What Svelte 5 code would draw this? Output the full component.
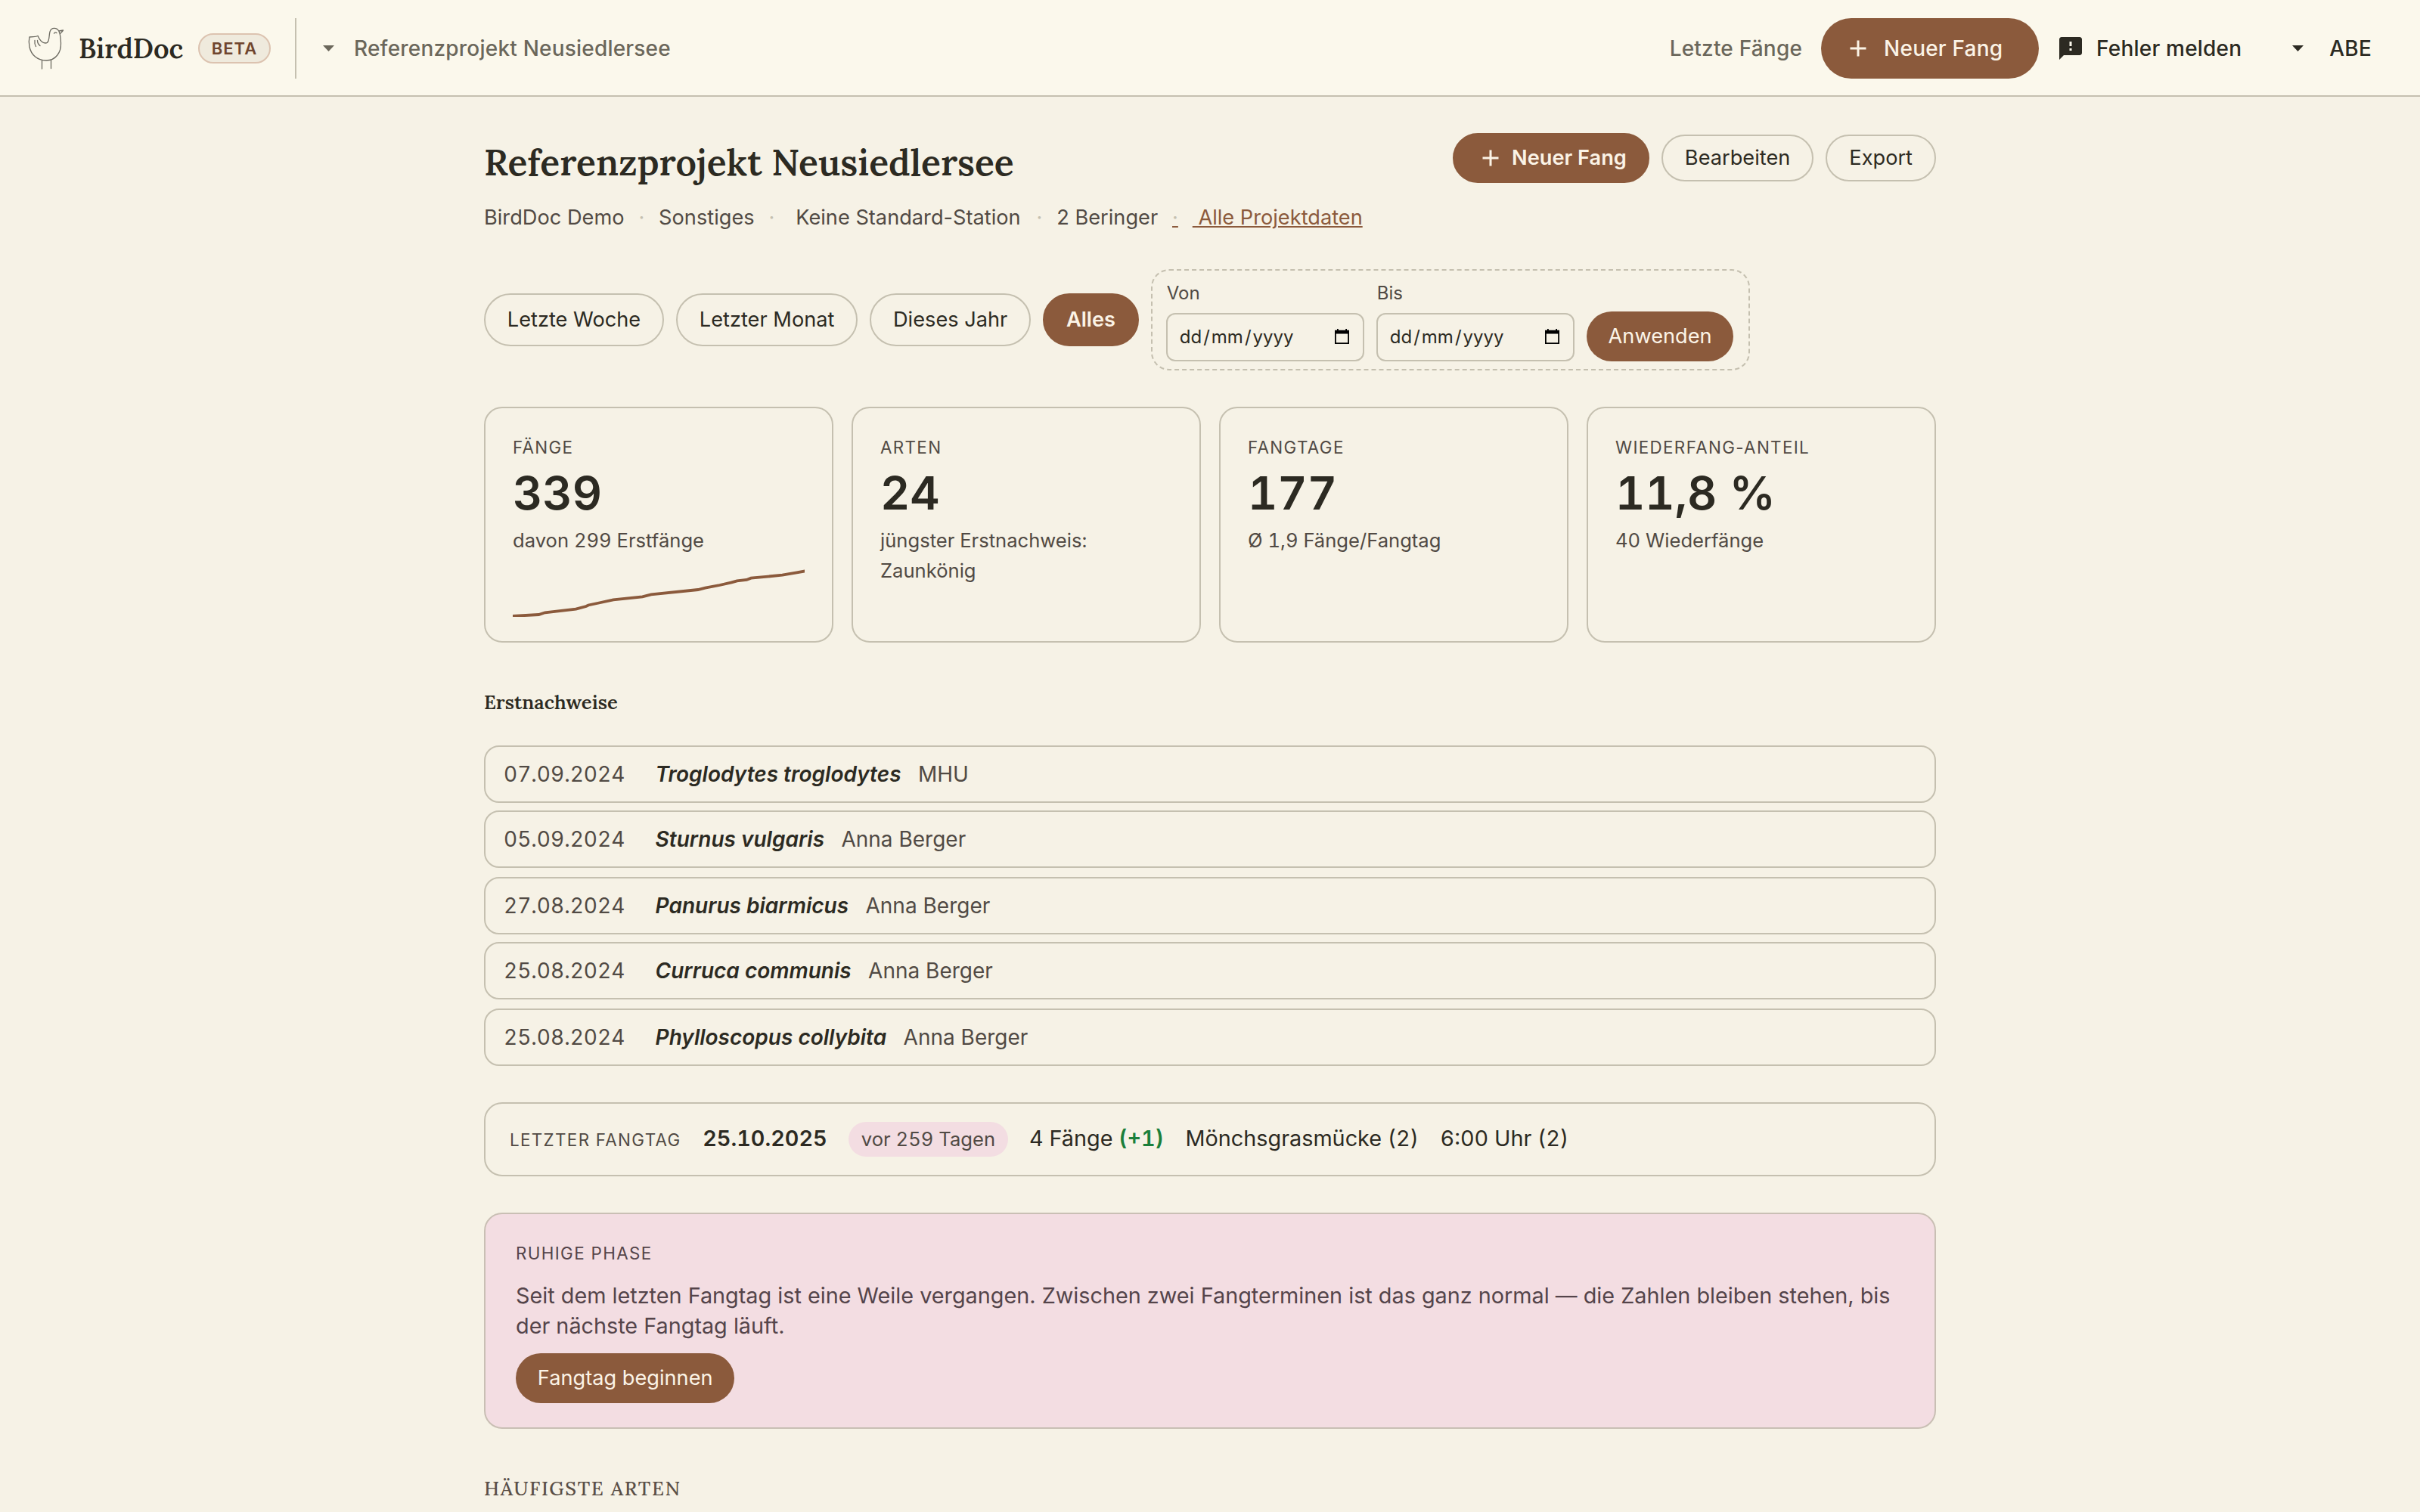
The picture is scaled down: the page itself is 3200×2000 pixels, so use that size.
<script>
  const filters = ['Letzte Woche', 'Letzter Monat', 'Dieses Jahr', 'Alles'];
  const firsts = [
    ['07.09.2024', 'Troglodytes troglodytes', 'MHU'],
    ['05.09.2024', 'Sturnus vulgaris', 'Anna Berger'],
    ['27.08.2024', 'Panurus biarmicus', 'Anna Berger'],
    ['25.08.2024', 'Curruca communis', 'Anna Berger'],
    ['25.08.2024', 'Phylloscopus collybita', 'Anna Berger']
  ];
  const stats = [
    { label: 'Fänge', value: '339', sub: 'davon 299 Erstfänge', spark: true },
    { label: 'Arten', value: '24', sub: 'jüngster Erstnachweis: Zaunkönig' },
    { label: 'Fangtage', value: '177', sub: 'Ø 1,9 Fänge/Fangtag' },
    { label: 'Wiederfang-Anteil', value: '11,8 %', sub: '40 Wiederfänge' }
  ];
</script>

{#snippet plus()}
  <svg width="36" height="36" viewBox="0 0 24 24"><path d="M19 13h-6v6h-2v-6H5v-2h6V5h2v6h6z" fill="currentColor" /></svg>
{/snippet}

{#snippet caret()}
  <svg width="15" height="8" viewBox="0 0 15 8"><path d="M0 0h15L7.500 8z" fill="currentColor" /></svg>
{/snippet}

<div class="page">
  <header>
    <svg class="bird" width="52" height="60" viewBox="14 14 52 60">
      <path d="M30 27.500C27.500 29.300 23 28 19 29C18 33 18 37 19 42C21 52 29 60 41 60C54 60 61 49 60.500 37C60.300 29 59.500 25 58 21.500C55 16 48 16 46 22C44.500 27 46 37 40 37C35 37 32 32 30 27.500M26 33.500C25.500 37 26 39 27.500 41.500M29.500 33.500C29.500 36 30.500 38.500 33 40.500M51.500 24.200C52.500 22.500 54 22.500 55 23.600M58 21L63.500 20C62 22 60.500 23.500 59.300 25M35.500 59.500V71M47.500 59V70.500" />
    </svg>
    <span class="brand">BirdDoc</span>
    <span class="beta">BETA</span>
    <span class="divider"></span>
    <div class="project">{@render caret()}<span>Referenzprojekt Neusiedlersee</span></div>
    <nav>
      <span class="muted">Letzte Fänge</span>
      <button class="nav-cta">{@render plus()}<span>Neuer Fang</span></button>
      <span class="report">
        <svg width="36" height="36" viewBox="0 0 24 24"><path d="M20 2H4c-1.100 0-1.990.9-1.990 2L2 22l4-4h14c1.100 0 2-.9 2-2V4c0-1.100-.9-2-2-2zm-7 12h-2v-2h2v2zm0-4h-2V6h2v4z" fill="currentColor" /></svg>
        <span>Fehler melden</span>
      </span>
      <span class="user">{@render caret()}<span>ABE</span></span>
    </nav>
  </header>

  <main>
    <div class="head">
      <h1>Referenzprojekt Neusiedlersee</h1>
      <div class="actions">
        <button class="btn primary">{@render plus()}<span>Neuer Fang</span></button>
        <button class="btn">Bearbeiten</button>
        <button class="btn">Export</button>
      </div>
    </div>
    <div class="meta">
      <span>BirdDoc Demo</span><i>·</i><span>Sonstiges</span><i>·</i><span class="station">Keine Standard-Station</span><i>·</i><span>2 Beringer</span><a href="#daten"><i>·</i><span>&nbsp;Alle Projektdaten</span></a>
    </div>

    <div class="filters">
      {#each filters as f}
        <button class="pill" class:active={f === 'Alles'}>{f}</button>
      {/each}
      <div class="range">
        {#each ['Von', 'Bis'] as l}
          <div class="field">
            <span class="flabel">{l}</span>
            <div class="date">
              <span>dd<s>/</s>mm<s>/</s>yyyy</span>
              <svg width="19" height="20" viewBox="0 0 19 20"><path d="M3 0h1.800v1.700h9.400V0H16v1.700h3V20H0V1.700h3zM1.800 6.600v11.600h15.400V6.600z" fill-rule="evenodd" /></svg>
            </div>
          </div>
        {/each}
        <button class="apply">Anwenden</button>
      </div>
    </div>

    <section class="stats">
      {#each stats as s}
        <article>
          <div class="label">{s.label}</div>
          <div class="value">{s.value}</div>
          <div class="sub">{s.sub}</div>
          {#if s.spark}
            <svg class="spark" width="386" height="64" viewBox="0 0 386 64"><path d="M0 63L34.400 61L42.700 58.300L83.500 53.700L97 50L100 48.500L114 45.500L133 41.300L171.500 37.300L183 34.300L245 28L254.500 25.700L273.600 22L289.500 18.300L296.500 16.300L309.300 15L315 12.700L356.500 8.700L375.600 5.300L387 3.300" /></svg>
          {/if}
        </article>
      {/each}
    </section>

    <h2>Erstnachweise</h2>
    <ul>
      {#each firsts as [d, n, who]}
        <li><span class="d">{d}</span><em>{n}</em><span class="who">{who}</span></li>
      {/each}
    </ul>

    <section class="last">
      <span class="label">Letzter Fangtag</span>
      <b>25.10.2025</b>
      <span class="chip">vor 259 Tagen</span>
      <span>4 Fänge <strong>(+1)</strong></span>
      <span>Mönchsgrasmücke (2)</span>
      <span>6:00 Uhr (2)</span>
    </section>

    <section class="quiet">
      <div class="label">Ruhige Phase</div>
      <p>Seit dem letzten Fangtag ist eine Weile vergangen. Zwischen zwei Fangterminen ist das ganz normal — die Zahlen bleiben stehen, bis der nächste Fangtag läuft.</p>
      <button class="apply">Fangtag beginnen</button>
    </section>

    <h3>Häufigste Arten</h3>
  </main>
</div>

<style>
  :global(body) { background: #f6f2e6; }
  .page { width: 3200px; height: 2000px; overflow: hidden; background: #f6f2e6; color: #2c2a22; font: 27.2px/40px Inter, sans-serif; }
  .page * { box-sizing: border-box; }
  button { font: inherit; letter-spacing: inherit; color: inherit; margin: 0; border: 0; background: none; white-space: nowrap; }
  svg { flex: none; display: block; }

  header { height: 128px; border-bottom: 2px solid #c5c0b0; background: #fbf8ec; display: flex; align-items: center; padding: 2px 64px 0 34px; font-size: 28px; font-weight: 500; letter-spacing: 0.2px; }
  .bird path { fill: none; stroke: #6c6a61; stroke-width: 1.300; stroke-linecap: round; stroke-linejoin: round; }
  .brand, h1, h2, h3 { font-family: Lora, 'Liberation Serif', serif; font-weight: 600; }
  .brand { font-size: 36px; margin-left: 18px; width: 138px; white-space: nowrap; letter-spacing: 0; }
  .beta { margin-left: 20px; width: 96px; height: 40px; border: 2px solid #dcc3b0; border-radius: 20px; background: #efeadd; color: #6f452e; font-size: 22px; line-height: 36px; font-weight: 600; letter-spacing: 1px; text-align: center; }
  .divider { width: 2px; height: 80px; background: #c5c0b0; margin-left: 32px; }
  .project { display: flex; align-items: center; gap: 26px; margin-left: 35px; color: #6b675b; }
  nav { margin-left: auto; display: flex; align-items: center; }
  .muted { color: #6b675b; }
  .nav-cta { margin: 0 24px 0 25px; width: 288px; height: 80px; border-radius: 40px; background: #8b5a3c; color: #fbf3e6; display: flex; align-items: center; gap: 16px; padding: 0 31px; }
  .report { display: flex; align-items: center; gap: 16px; }
  .user { display: flex; align-items: center; gap: 34px; margin-left: 67px; }

  main { width: 1920px; margin: 0 auto; padding-top: 48px; }
  .head { display: flex; justify-content: space-between; height: 80px; }
  h1 { margin: 0; font-size: 48px; line-height: 78px; }
  .actions { display: flex; align-items: center; gap: 16px; height: 66px; }
  .btn { height: 62px; border: 2px solid #c5c0b0; border-radius: 33px; padding: 0 29px; }
  .btn.primary { height: 66px; background: #8b5a3c; border-color: #8b5a3c; color: #fbf3e6; font-weight: 600; display: flex; align-items: center; gap: 10px; padding: 0 28px 0 30px; }
  .meta { display: flex; margin-top: 12px; color: #514a44; height: 40px; }
  .meta i { font-style: normal; color: #c5c0b0; width: 8px; margin: 0 18.8px; text-align: center; }
  .meta a { color: #8b5a3c; text-decoration: underline; display: flex; }
  .station { margin: 0 2px 0 9px; }

  .filters { display: flex; align-items: center; gap: 16px; margin-top: 48px; }
  .pill { height: 70px; border: 2px solid #c5c0b0; border-radius: 35px; padding: 0 28.8px; }
  .pill.active { background: #8b5a3c; border-color: #8b5a3c; color: #fbf3e6; font-weight: 600; }
  .range { height: 134px; border: 2px dashed #c5c0b0; border-radius: 24px; padding: 0 20px 10px 18px; display: flex; align-items: flex-end; gap: 16px; }
  .flabel { display: block; font-size: 24px; line-height: 32px; margin-bottom: 10px; padding-left: 1px; color: #514a44; }
  .date { width: 262px; height: 64px; border: 2px solid #c5c0b0; border-radius: 12px; padding: 0 18px 0 16px; display: flex; align-items: center; justify-content: space-between; font-size: 24px; }
  .date s { text-decoration: none; padding: 0 2px; }
  .date svg { margin-bottom: 2px; }
  .apply { height: 66px; border-radius: 33px; background: #8b5a3c; color: #fbf3e6; padding: 0 28.8px; }

  .stats { display: grid; grid-template-columns: repeat(4, 1fr); gap: 24px; margin-top: 48px; }
  article { height: 312px; border: 2px solid #c5c0b0; border-radius: 24px; padding: 32px 36px; }
  .label { font-size: 22.4px; line-height: 40px; letter-spacing: 0.06em; text-transform: uppercase; color: #514a44; }
  .value { margin-top: 4px; font-size: 60.8px; line-height: 72px; font-weight: 600; font-variant-numeric: tabular-nums; }
  .sub { margin-top: 7px; font-size: 25.6px; line-height: 40px; color: #514a44; font-variant-numeric: tabular-nums; }
  .spark { margin-top: 17px; }
  .spark path { fill: none; stroke: #8b5a3c; stroke-width: 3.800; }

  h2 { margin: 55px 0 33px; font-size: 25.6px; line-height: 48px; }
  ul { list-style: none; margin: 0; padding: 0; font-size: 28px; }
  li { height: 76px; border: 2px solid #c5c0b0; border-radius: 20px; padding: 0 24px; display: flex; align-items: center; margin-bottom: 12px; }
  li:nth-child(odd) { margin-bottom: 10px; }
  .d { width: 200.6px; font-variant-numeric: tabular-nums; color: #514a44; }
  em { font-weight: 600; margin-right: 22.4px; }
  .who { color: #514a44; }

  .last { margin-top: 48px; height: 98px; border: 2px solid #c5c0b0; border-radius: 24px; padding: 24px 32px 0; display: flex; align-items: baseline; gap: 28.6px; font-size: 28.8px; font-variant-numeric: tabular-nums; }
  .last b { font-weight: 600; }
  strong { color: #1b7f3b; font-weight: 600; }
  .chip { height: 46px; line-height: 46px; border-radius: 23px; background: #f3dde2; padding: 0 16.5px; font-size: 25.6px; color: #514a44; }

  .quiet { margin-top: 48px; height: 286px; border: 2px solid #c9bfb4; border-radius: 24px; background: #f3dde2; padding: 32px 40px; color: #54444a; }
  .quiet .label { color: #54444a; }
  p { margin: 16px 0; font-size: 28.8px; }
  h3 { margin: 59px 0 0; font-weight: 500; font-size: 25.6px; text-transform: uppercase; letter-spacing: 0.063em; color: #5a4f47; }
</style>
